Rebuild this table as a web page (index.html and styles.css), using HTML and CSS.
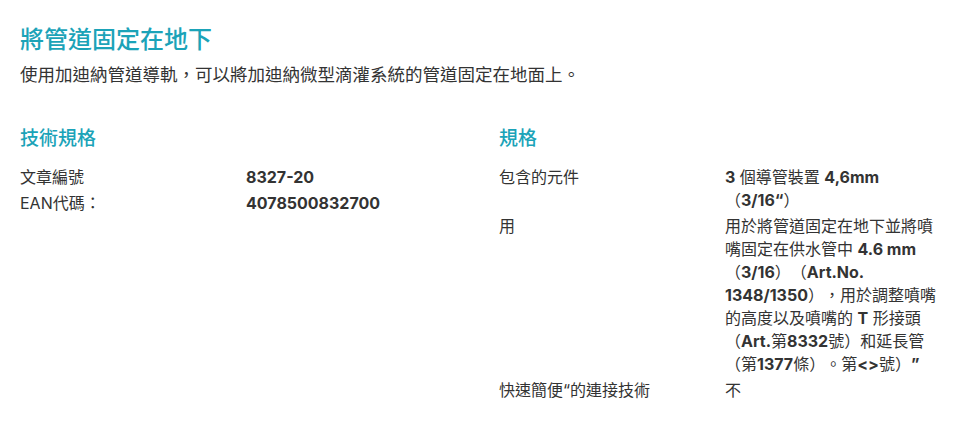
FILE: index.html
```html
<!doctype html>
<html lang="zh-Hant">
	<head>
		<meta charset="UTF-8" />
		<meta name="viewport" content="width=device-width, initial-scale=1.0" />
		<title>將管道固定在地下</title>
		<link rel="stylesheet" href="styles.css">
	</head>
	<body>
		<div class="page">
			<h1 class="title">將管道固定在地下</h1>
			<p class="lead">使用加迪納管道導軌，可以將加迪納微型滴灌系統的管道固定在地面上。</p>

			<div class="specs">
				<section class="spec-block">
					<h2>技術規格</h2>
					<dl class="spec-list">
						<div class="spec-row">
							<dt>文章編號</dt>
							<dd><b>8327-20</b></dd>
						</div>
						<div class="spec-row">
							<dt>EAN代碼：</dt>
							<dd><b>4078500832700</b></dd>
						</div>
					</dl>
				</section>

				<section class="spec-block">
					<h2>規格</h2>
					<dl class="spec-list">
						<div class="spec-row">
							<dt>包含的元件</dt>
							<dd><b>3</b> 個導管裝置 <b>4,6mm</b>（<b>3/16“</b>）</dd>
						</div>
						<div class="spec-row">
							<dt>用</dt>
							<dd>用於將管道固定在地下並將噴嘴固定在供水管中 <b>4.6 mm</b>（<b>3/16</b>）（<b>Art.No. 1348/1350</b>），用於調整噴嘴的高度以及噴嘴的 <b>T</b> 形接頭（<b>Art.</b>第<b>8332</b>號）和延長管（第<b>1377</b>條）。第<b>&lt;&gt;</b>號）<b>”</b></dd>
						</div>
						<div class="spec-row">
							<dt>快速簡便“的連接技術</dt>
							<dd>不</dd>
						</div>
					</dl>
				</section>
			</div>
		</div>
	</body>
</html>
```

FILE: styles.css
```css
:root {
	--accent-color: #1ba3b8;
	--text-color: #333;
	--background-color: #fff;
}

body {
	margin: 0;
	font-family: Inter, 'Noto Sans CJK TC', sans-serif;
	color: var(--text-color);
	background-color: var(--background-color);
	text-spacing-trim: space-all;
}

.page {
	padding: 24px 20px 20px;
}

.title {
	margin: 0;
	font-size: 24px;
	line-height: 32px;
	font-weight: 500;
	color: var(--accent-color);
}

.lead {
	margin: 6px 0 0;
	font-size: 17.5px;
	line-height: 26px;
}

.specs {
	display: grid;
	grid-template-columns: 459px 459px;
	gap: 20px;
	margin-top: 37px;
}

.spec-block h2 {
	margin: 0 0 13px;
	font-size: 19px;
	line-height: 28px;
	font-weight: 500;
	color: var(--accent-color);
}

.spec-list {
	margin: 0;
}

.spec-row {
	display: grid;
	grid-template-columns: 226px 214px;
	padding-bottom: 3px;
	font-size: 16px;
	line-height: 23px;
}

.spec-row dt,
.spec-row dd {
	margin: 0;
}

.spec-row b {
	font-weight: 700;
}
```
